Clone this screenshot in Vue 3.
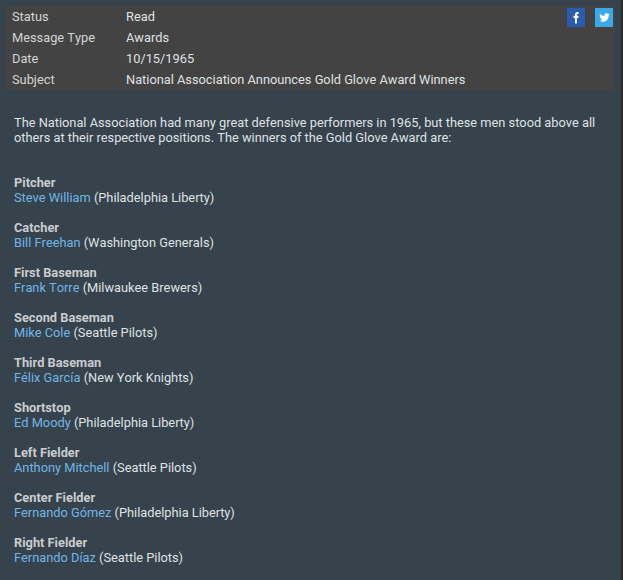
<script setup>
const meta = [
  ['Status', 'Read'],
  ['Message Type', 'Awards'],
  ['Date', '10/15/1965'],
  ['Subject', 'National Association Announces Gold Glove Award Winners'],
]
const awards = [
  ['Pitcher', 'Steve William', 'Philadelphia Liberty'],
  ['Catcher', 'Bill Freehan', 'Washington Generals'],
  ['First Baseman', 'Frank Torre', 'Milwaukee Brewers'],
  ['Second Baseman', 'Mike Cole', 'Seattle Pilots'],
  ['Third Baseman', 'Félix García', 'New York Knights'],
  ['Shortstop', 'Ed Moody', 'Philadelphia Liberty'],
  ['Left Fielder', 'Anthony Mitchell', 'Seattle Pilots'],
  ['Center Fielder', 'Fernando Gómez', 'Philadelphia Liberty'],
  ['Right Fielder', 'Fernando Díaz', 'Seattle Pilots'],
]
</script>

<template>
  <div class="page">
    <div class="meta">
      <div class="rows">
        <div v-for="r in meta" :key="r[0]" class="row">
          <span class="key">{{ r[0] }}</span>
          <span>{{ r[1] }}</span>
        </div>
      </div>
      <div class="social">
        <svg class="icon fb" viewBox="0 0 18 19">
          <path fill="#fff" d="M8 15.500V10H6.500V7.800H8V6.500C8 4.900 8.900 4 10.400 4c.5 0 1 0 1.200.1v1.900h-.8c-.7 0-.9.3-.9.9v.9h1.700l-.2 2.200h-1.500v5.500z"/>
        </svg>
        <svg class="icon tw" viewBox="0 0 18 19">
          <path fill="#fff" d="M14.500 6.300c-.4.2-.8.300-1.200.4.400-.3.800-.7 1-1.200-.4.200-.9.400-1.300.5a2.100 2.100 0 0 0-3.600 1.900C7.600 7.800 6 7 5 5.700c-.6 1-.3 2.200.7 2.900-.3 0-.7-.1-1-.3 0 1 .7 1.900 1.700 2.100-.3.100-.6.100-.9 0 .3.900 1.100 1.500 2 1.500a4.300 4.300 0 0 1-3.100.9 6 6 0 0 0 9.200-5.400c.4-.3.700-.6.900-1z"/>
        </svg>
      </div>
    </div>
    <p class="intro">The National Association had many great defensive performers in 1965, but these men stood above all others at their respective positions. The winners of the Gold Glove Award are:</p>
    <div class="awards">
      <div v-for="a in awards" :key="a[0]" class="award">
        <div class="pos">{{ a[0] }}</div>
        <div><a class="link">{{ a[1] }}</a> ({{ a[2] }})</div>
      </div>
    </div>
  </div>
</template>

<style scoped>
.page {
  width: 621px;
  height: 580px;
  overflow: hidden;
  box-sizing: border-box;
  padding: 6px 0 0 5px;
  background: #36434d;
  color: #dfe1e2;
  font: 12.800px/15px Roboto, sans-serif;
  font-kerning: none;
}
.meta {
  position: relative;
  width: 610px;
  background: #434343;
}
.row {
  display: flex;
  height: 21px;
  line-height: 21px;
  padding-left: 7px;
}
.key { width: 114px; color: #d2d4d5; }
.social {
  position: absolute;
  top: 2px;
  right: 2px;
  display: flex;
  gap: 10px;
}
.icon { width: 18px; height: 19px; display: block; }
.fb { background: #2a5cb0; }
.tw { background: #3aa9e8; }
.intro { margin: 25px 0 0 9px; width: 590px; }
.awards { margin: 30px 0 0 9px; }
.award { margin-bottom: 15px; }
.pos { font-weight: 700; color: #c9cccf; }
.link { color: #71b5e6; }
</style>

<style>
html, body { background: #2b2b2b; }
</style>
